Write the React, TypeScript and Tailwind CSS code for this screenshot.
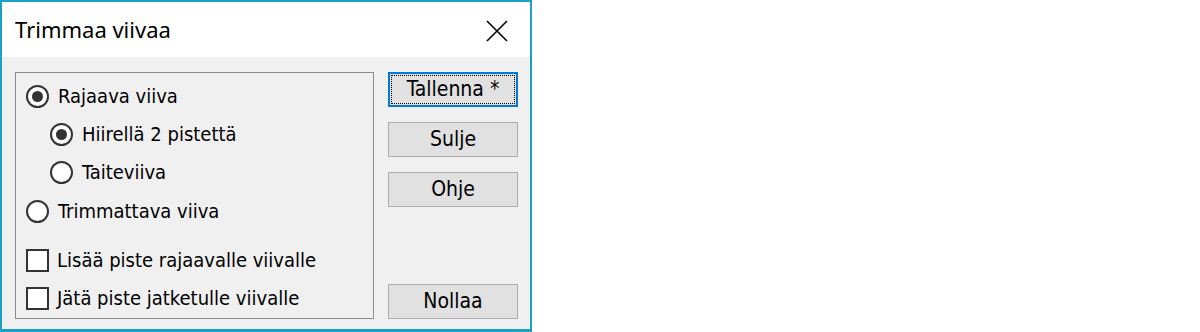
import React, { useState } from 'react';

const uiFont = { fontFamily: '"DejaVu Sans Condensed", "DejaVu Sans", sans-serif', fontStretch: 'condensed' as const };

function Radio({ checked, label, onClick }: { checked: boolean; label: string; onClick: () => void }) {
  return (
    <div className="flex h-[38px] items-center cursor-default" onClick={onClick}>
      <span className="flex h-[23px] w-[23px] shrink-0 items-center justify-center rounded-full border-2 border-[#333333] bg-white">
        {checked && <span className="h-[11px] w-[11px] rounded-full bg-[#333333]" />}
      </span>
      <span className="ml-[9px] text-[20px] leading-none text-black">{label}</span>
    </div>
  );
}

function Check({ checked, label, onClick }: { checked: boolean; label: string; onClick: () => void }) {
  return (
    <div className="flex h-[38px] items-center cursor-default" onClick={onClick}>
      <span className="flex h-[23px] w-[23px] shrink-0 items-center justify-center border-2 border-[#333333] bg-white text-[16px] leading-none">
        {checked ? '✓' : ''}
      </span>
      <span className="ml-[8px] text-[20px] leading-none text-black">{label}</span>
    </div>
  );
}

function Button({ label, focused }: { label: string; focused?: boolean }) {
  if (focused) {
    return (
      <button className="flex h-[35px] w-[130px] items-center justify-center border-2 border-[#0078d7] bg-[#e1e1e1] p-[1px]">
        <span className="flex h-full w-full items-center justify-center border border-dotted border-black text-[21px] leading-none text-black">
          {label}
        </span>
      </button>
    );
  }
  return (
    <button className="flex h-[35px] w-[130px] items-center justify-center border border-[#adadad] bg-[#e1e1e1] text-[21px] leading-none text-black">
      {label}
    </button>
  );
}

export default function App() {
  const [mode, setMode] = useState<'rajaava' | 'trimmattava'>('rajaava');
  const [sub, setSub] = useState<'hiiri' | 'taite'>('hiiri');
  const [addPoint, setAddPoint] = useState(false);
  const [keepPoint, setKeepPoint] = useState(false);

  return (
    <div className="h-[332px] w-[1200px] bg-white">
      <div className="flex h-[332px] w-[532px] flex-col border-x-2 border-t-2 border-b-[3px] border-[#1ba1c6]" style={uiFont}>
        <div className="flex h-[55px] shrink-0 items-center justify-between bg-white pl-[13px] pr-[22px]">
          <span className="text-[22px] text-black" style={{ fontFamily: '"Noto Sans", "Open Sans", sans-serif', fontStretch: 'normal' }}>
            Trimmaa viivaa
          </span>
          <svg width="22" height="22" viewBox="0 0 22 22" className="mt-[2px]">
            <path d="M1 1 L21 21 M21 1 L1 21" stroke="#000" strokeWidth="1.6" fill="none" />
          </svg>
        </div>
        <div className="flex flex-1 bg-[#f0f0f0] pl-[13px] pr-[12px] pt-[15px]">
          <div className="flex h-[247px] w-[359px] flex-col border border-[#8c8c8c] px-[10px] pt-[4px]">
            <Radio checked={mode === 'rajaava'} label="Rajaava viiva" onClick={() => setMode('rajaava')} />
            <div className="pl-[24px]">
              <Radio checked={sub === 'hiiri'} label="Hiirellä 2 pistettä" onClick={() => setSub('hiiri')} />
              <Radio checked={sub === 'taite'} label="Taiteviiva" onClick={() => setSub('taite')} />
            </div>
            <div className="mt-[1px]">
              <Radio checked={mode === 'trimmattava'} label="Trimmattava viiva" onClick={() => setMode('trimmattava')} />
            </div>
            <div className="mt-[11px]">
              <Check checked={addPoint} label="Lisää piste rajaavalle viivalle" onClick={() => setAddPoint(!addPoint)} />
              <Check checked={keepPoint} label="Jätä piste jatketulle viivalle" onClick={() => setKeepPoint(!keepPoint)} />
            </div>
          </div>
          <div className="ml-[14px] flex h-[247px] flex-col">
            <Button label="Tallenna *" focused />
            <div className="mt-[15px]">
              <Button label="Sulje" />
            </div>
            <div className="mt-[15px]">
              <Button label="Ohje" />
            </div>
            <div className="mt-auto">
              <Button label="Nollaa" />
            </div>
          </div>
        </div>
      </div>
    </div>
  );
}
